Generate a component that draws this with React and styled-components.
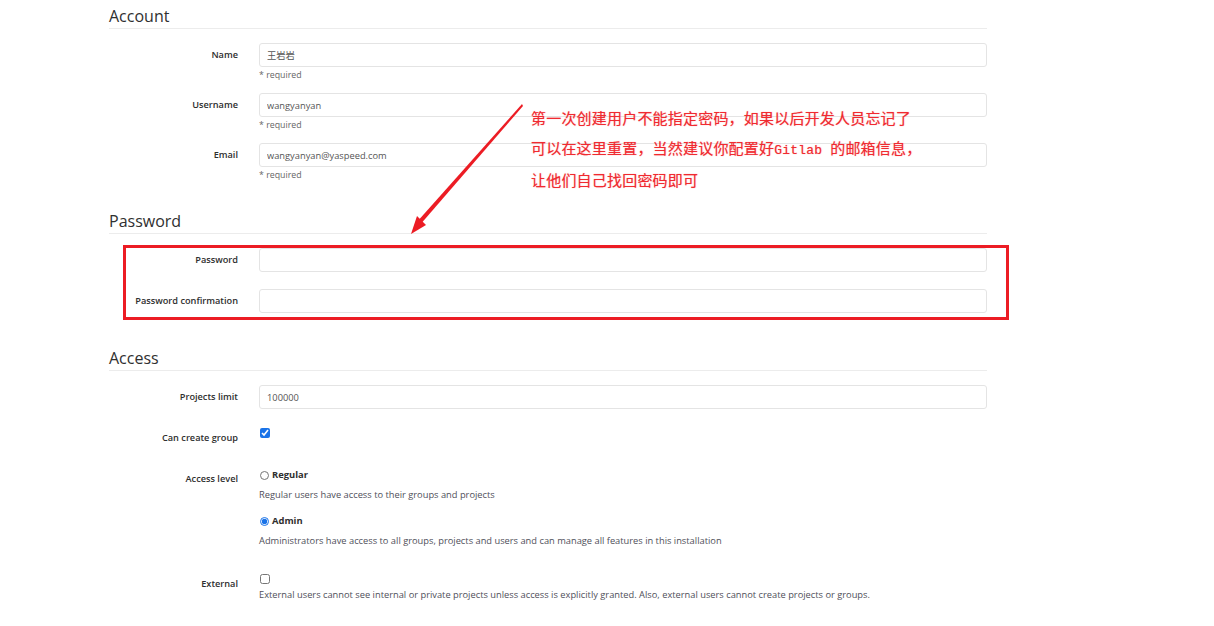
import styled, { createGlobalStyle } from 'styled-components';

const GlobalStyle = createGlobalStyle`
    html, body {
        margin: 0;
        padding: 0;
        background: #fff;
    }
    body {
        font-family: 'Open Sans', 'Noto Sans CJK SC', sans-serif;
        color: #2e2e2e;
    }
`;

const Page = styled.div`
    position: relative;
    width: 1214px;
    height: 626px;
    overflow: hidden;
`;

const Form = styled.form`
    display: flex;
    flex-direction: column;
    width: 878px;
    margin-left: 109px;
`;

const SectionTitle = styled.h4`
    margin: ${(p) => (p.$first ? '6px' : '18px')} 0 14px;
    padding-bottom: 2px;
    font-size: 16px;
    line-height: 20px;
    font-weight: 400;
    color: #303030;
    border-bottom: 1px solid #ececec;
`;

const Group = styled.div`
    display: grid;
    grid-template-columns: 129px 1fr;
    column-gap: 21px;
    align-items: start;
    margin-bottom: ${(p) => p.$spacing ?? 17}px;
`;

const Label = styled.label`
    padding: 6px 0;
    text-align: right;
    font-size: 9.2px;
    line-height: 12px;
    font-weight: 600;
    color: #2e2e2e;
    white-space: nowrap;
`;

const Controls = styled.div`
    display: flex;
    flex-direction: column;
    align-items: flex-start;
`;

const Input = styled.input`
    box-sizing: border-box;
    width: 100%;
    height: 24px;
    padding: 0 7px;
    border: 1px solid #e4e4e4;
    border-radius: 3px;
    font-family: 'Open Sans', 'Noto Sans CJK SC', sans-serif;
    font-size: 9.3px;
    color: #555;
    background: #fff;
    outline: none;
`;

const Hint = styled.div`
    margin-top: ${(p) => p.$top ?? 2}px;
    font-size: ${(p) => (p.$dark ? 9.3 : 8.8)}px;
    line-height: 12px;
    color: ${(p) => (p.$dark ? '#4f4f5a' : '#666')};
    white-space: nowrap;
`;

const Check = styled.input`
    width: 10px;
    height: 10px;
    margin: 2px 0 0 1px;
    accent-color: #1a73e8;
`;

const Option = styled.label`
    display: flex;
    align-items: center;
    gap: 3px;
    margin-top: ${(p) => p.$top}px;
    font-size: 9.4px;
    line-height: 14px;
    font-weight: 700;
    color: #2e2e2e;
`;

const Radio = styled.input`
    width: 9px;
    height: 9px;
    margin: 0 0 0 1px;
    accent-color: #1a73e8;
`;

const Highlight = styled.div`
    position: relative;
    display: flex;
    flex-direction: column;

    &::after {
        content: '';
        position: absolute;
        top: -3px;
        left: 14px;
        right: -22px;
        bottom: 10px;
        border: 3px solid #ec1c24;
        pointer-events: none;
    }
`;

const Note = styled.div`
    position: absolute;
    left: 531px;
    top: 103px;
    font-family: 'Noto Sans CJK SC', sans-serif;
    font-size: 15px;
    line-height: 29.5px;
    letter-spacing: 0.2px;
    color: #f02a30;
    text-shadow: 0 0 1px rgba(240, 42, 48, 0.5);
`;

const Mono = styled.span`
    font-family: 'Liberation Mono', monospace;
    font-size: 13px;
`;

const Arrow = styled.svg`
    position: absolute;
    left: 0;
    top: 0;
    pointer-events: none;
`;

const AccountField = ({ label, value }) => (
    <Group $spacing={12}>
        <Label>{label}</Label>
        <Controls>
            <Input defaultValue={value} readOnly />
            <Hint>* required</Hint>
        </Controls>
    </Group>
);

export default function App() {
    return (
        <Page>
            <GlobalStyle />
            <Form onSubmit={(e) => e.preventDefault()}>
                <SectionTitle $first>Account</SectionTitle>
                <AccountField label="Name" value="王岩岩" />
                <AccountField label="Username" value="wangyanyan" />
                <AccountField label="Email" value="wangyanyan@yaspeed.com" />

                <SectionTitle>Password</SectionTitle>
                <Highlight>
                    <Group>
                        <Label>Password</Label>
                        <Input type="password" readOnly />
                    </Group>
                    <Group>
                        <Label>Password confirmation</Label>
                        <Input type="password" readOnly />
                    </Group>
                </Highlight>

                <SectionTitle>Access</SectionTitle>
                <Group>
                    <Label>Projects limit</Label>
                    <Input defaultValue="100000" readOnly />
                </Group>
                <Group>
                    <Label>Can create group</Label>
                    <Controls>
                        <Check type="checkbox" defaultChecked />
                    </Controls>
                </Group>
                <Group $spacing={25}>
                    <Label>Access level</Label>
                    <Controls>
                        <Option $top={1}>
                            <Radio type="radio" name="level" />
                            Regular
                        </Option>
                        <Hint $top={7} $dark>
                            Regular users have access to their groups and projects
                        </Hint>
                        <Option $top={13}>
                            <Radio type="radio" name="level" defaultChecked />
                            Admin
                        </Option>
                        <Hint $top={7} $dark>
                            Administrators have access to all groups, projects and users and can manage all features in this installation
                        </Hint>
                    </Controls>
                </Group>
                <Group>
                    <Label>External</Label>
                    <Controls>
                        <Check type="checkbox" />
                        <Hint $top={5} $dark>
                            External users cannot see internal or private projects unless access is explicitly granted. Also, external users cannot create projects or groups.
                        </Hint>
                    </Controls>
                </Group>
            </Form>

            <Arrow width="1214" height="626" viewBox="0 0 1214 626">
                <polygon points="522,104 523,106 419,226 416,223" fill="#ec1c24" />
                <polygon points="411,234 426,225 417,216" fill="#ec1c24" />
            </Arrow>
            <Note>
                第一次创建用户不能指定密码，如果以后开发人员忘记了
                <br />
                可以在这里重置，当然建议你配置好<Mono>Gitlab </Mono>的邮箱信息，
                <br />
                让他们自己找回密码即可
            </Note>
        </Page>
    );
}
